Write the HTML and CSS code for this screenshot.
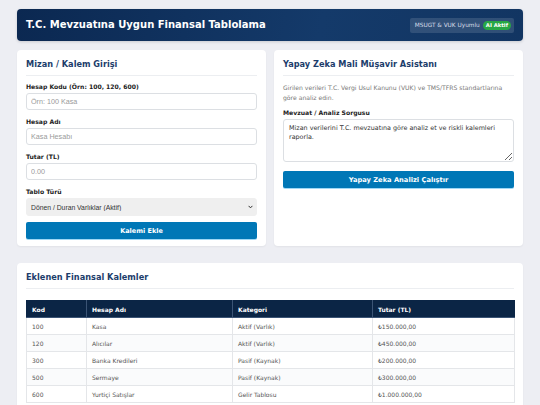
FILE: index.html
```html
<!DOCTYPE html>
<html lang="tr">
<head>
<meta charset="utf-8">
<title>T.C. Mevzuatına Uygun Finansal Tablolama</title>
<link rel="stylesheet" href="styles.css">
</head>
<body>
<header class="topbar">
  <h1 class="topbar-title">T.C. Mevzuatına Uygun Finansal Tablolama</h1>
  <div class="badge">MSUGT &amp; VUK Uyumlu <span class="pill">AI Aktif</span></div>
</header>

<div class="grid">
  <section class="card">
    <h2 class="card-title">Mizan / Kalem Girişi</h2>
    <div class="group">
      <label class="label">Hesap Kodu (Örn: 100, 120, 600)</label>
      <input class="field" type="text" placeholder="Örn: 100 Kasa">
    </div>
    <div class="group">
      <label class="label">Hesap Adı</label>
      <input class="field" type="text" placeholder="Kasa Hesabı">
    </div>
    <div class="group">
      <label class="label">Tutar (TL)</label>
      <input class="field" type="text" placeholder="0.00">
    </div>
    <div class="group tight">
      <label class="label">Tablo Türü</label>
      <div class="select-wrap">
        <select class="field select">
          <option>Dönen / Duran Varlıklar (Aktif)</option>
        </select>
        <svg class="chev" width="5" height="4" viewBox="0 0 10 7"><path d="M1.2 1.2 5 5.2 8.8 1.2" fill="none" stroke="#333" stroke-width="2"/></svg>
      </div>
    </div>
    <button class="btn">Kalemi Ekle</button>
  </section>

  <section class="card">
    <h2 class="card-title">Yapay Zeka Mali Müşavir Asistanı</h2>
    <p class="desc">Girilen verileri T.C. Vergi Usul Kanunu (VUK) ve TMS/TFRS standartlarına göre analiz edin.</p>
    <label class="label">Mevzuat / Analiz Sorgusu</label>
    <textarea class="area">Mizan verilerini T.C. mevzuatına göre analiz et ve riskli kalemleri raporla.</textarea>
    <button class="btn btn-ai">Yapay Zeka Analizi Çalıştır</button>
  </section>
</div>

<section class="card">
  <h2 class="card-title">Eklenen Finansal Kalemler</h2>
  <table class="tbl">
    <colgroup>
      <col class="c1"><col class="c2"><col class="c3"><col class="c4">
    </colgroup>
    <thead>
      <tr><th>Kod</th><th>Hesap Adı</th><th>Kategori</th><th>Tutar (TL)</th></tr>
    </thead>
    <tbody>
      <tr><td>100</td><td>Kasa</td><td>Aktif (Varlık)</td><td>₺150.000,00</td></tr>
      <tr><td>120</td><td>Alıcılar</td><td>Aktif (Varlık)</td><td>₺450.000,00</td></tr>
      <tr><td>300</td><td>Banka Kredileri</td><td>Pasif (Kaynak)</td><td>₺200.000,00</td></tr>
      <tr><td>500</td><td>Sermaye</td><td>Pasif (Kaynak)</td><td>₺300.000,00</td></tr>
      <tr><td>600</td><td>Yurtiçi Satışlar</td><td>Gelir Tablosu</td><td>₺1.000.000,00</td></tr>
    </tbody>
  </table>
</section>
</body>
</html>
```

FILE: styles.css
```css
* { box-sizing: border-box; }

html, body { margin: 0; }

body {
  padding: 9px 17px;
  background: #edeef3;
  font-family: "DejaVu Sans", Verdana, sans-serif;
  color: #333;
}

.topbar {
  height: 32px;
  padding: 0 9px;
  display: flex;
  align-items: center;
  justify-content: space-between;
  background: linear-gradient(100deg, #0b2851 0%, #143a6a 60%, #123562 100%);
  border-radius: 4px;
  box-shadow: 0 1px 3px rgba(0,0,0,0.15);
}

.topbar-title {
  margin: 0;
  font-size: 10px;
  font-weight: bold;
  color: #fff;
  line-height: 12px;
}

.badge {
  display: flex;
  align-items: center;
  gap: 3px;
  height: 15px;
  padding: 0 3px 0 5px;
  background: rgba(255,255,255,0.13);
  border-radius: 2px;
  font-size: 5.8px;
  color: #d7deea;
}

.pill {
  display: inline-block;
  padding: 0 3px;
  height: 9px;
  line-height: 9px;
  background: #28a745;
  color: #fff;
  font-weight: bold;
  font-size: 5.3px;
  border-radius: 5px;
}

.grid {
  display: grid;
  grid-template-columns: 1fr 1fr;
  gap: 8px;
  margin: 9px 0 17px;
}

.card {
  background: #fff;
  border-radius: 4px;
  padding: 9px 9px 7px;
  box-shadow: 0 1px 2px rgba(0,0,0,0.05);
}

.card-title {
  margin: 0 0 7px;
  padding-bottom: 6px;
  border-bottom: 1px solid #eceef1;
  font-size: 8.2px;
  line-height: 10px;
  font-weight: bold;
  color: #1c3d6b;
}

.group { margin-bottom: 8px; }
.group.tight { margin-bottom: 6px; }

.label {
  display: block;
  margin-bottom: 2px;
  font-size: 6.1px;
  line-height: 8px;
  font-weight: bold;
  color: #222;
}

.field {
  display: block;
  width: 100%;
  height: 17px;
  margin: 0;
  padding: 0 4px;
  border: 1px solid #dcdfe3;
  border-radius: 3px;
  font-family: "Liberation Sans", Arial, sans-serif;
  font-size: 7.2px;
  color: #333;
  background: #fff;
  outline: none;
}

.field::placeholder { color: #9a9a9a; }

.select-wrap { position: relative; }

.select {
  -webkit-appearance: none;
  appearance: none;
  height: 18px;
  background: #efefef;
  border-color: #efefef;
  font-size: 6.8px;
  color: #333;
}

.chev {
  position: absolute;
  right: 4px;
  top: 7px;
  pointer-events: none;
}

.btn {
  display: block;
  width: 100%;
  height: 17px;
  margin: 0;
  padding: 0;
  border: none;
  border-radius: 2px;
  background: #0077b6;
  color: #fff;
  font-family: "DejaVu Sans", Verdana, sans-serif;
  font-size: 6.5px;
  font-weight: bold;
  box-shadow: 0 1px 0 #9fd8f5;
}

.btn-ai { font-size: 6.7px; }

.desc {
  margin: 0 0 6px;
  font-size: 6.1px;
  line-height: 10px;
  color: #777;
}

.area {
  display: block;
  width: 100%;
  height: 43px;
  margin: 1px 0 9px;
  padding: 4px 5px;
  border: 1px solid #dcdfe3;
  border-radius: 3px;
  font-family: "DejaVu Sans", Verdana, sans-serif;
  font-size: 6.4px;
  line-height: 9px;
  color: #333;
  resize: vertical;
  outline: none;
}

.tbl {
  width: 100%;
  margin-top: 11px;
  border-collapse: collapse;
  table-layout: fixed;
  font-size: 6px;
}

.c1 { width: 60px; }
.c2 { width: 146px; }
.c3 { width: 140px; }
.c4 { width: 142px; }

.tbl th {
  height: 17px;
  padding: 0 5px;
  text-align: left;
  background: #0b2545;
  color: #fff;
  font-weight: bold;
  border: 1px solid #3b5475;
  border-top-color: #0b2545;
}

.tbl th:first-child { border-left-color: #0b2545; }
.tbl th:last-child { border-right-color: #0b2545; }

.tbl td {
  height: 17px;
  padding: 0 5px;
  border: 1px solid #e4e6e9;
  color: #555;
}

.tbl tbody tr:nth-child(even) td { background: #fafbfc; }
```
